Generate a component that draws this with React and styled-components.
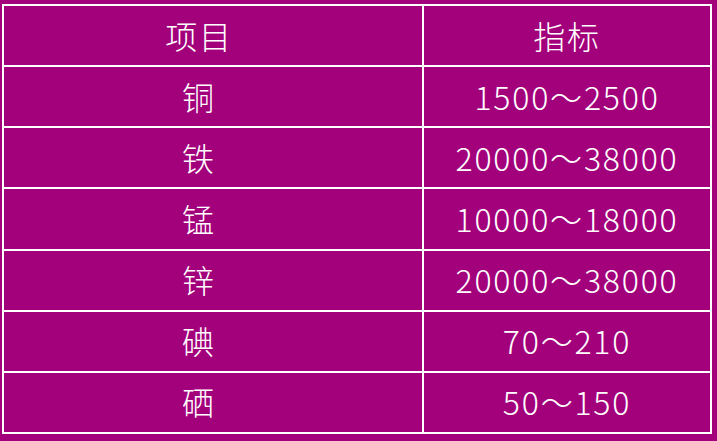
import React from "react";
import styled, { createGlobalStyle } from "styled-components";

const Global = createGlobalStyle`
  html, body { margin: 0; padding: 0; background: #a3007c; }
  body { font-family: "Noto Sans CJK SC", "Noto Sans", sans-serif; }
`;

const Page = styled.div`
  width: 717px;
  height: 441px;
  background: #a3007c;
  padding: 4px 5px 7px 2px;
  box-sizing: border-box;
  display: flex;
`;

const Table = styled.div`
  flex: 1;
  display: grid;
  grid-template-columns: 418px 1fr;
  grid-template-rows: repeat(7, 1fr);
  gap: 2px;
  padding: 2px;
  background: #ffffff;
`;

const Cell = styled.div`
  background: #a3007c;
  color: #ffffff;
  display: flex;
  align-items: center;
  justify-content: center;
  font-size: 32px;
  font-weight: 300;
  letter-spacing: 1.8px;
  line-height: 1;
  padding-bottom: 2px;
  padding-right: ${(p) => (p.$name ? "28px" : "0")};
`;

const rows = [
  ["项目", "指标"],
  ["铜", "1500～2500"],
  ["铁", "20000～38000"],
  ["锰", "10000～18000"],
  ["锌", "20000～38000"],
  ["碘", "70～210"],
  ["硒", "50～150"],
];

export default function App() {
  return (
    <>
      <Global />
      <Page>
        <Table>
          {rows.map(([a, b], i) => (
            <React.Fragment key={i}>
              <Cell $name>{a}</Cell>
              <Cell>{b}</Cell>
            </React.Fragment>
          ))}
        </Table>
      </Page>
    </>
  );
}
